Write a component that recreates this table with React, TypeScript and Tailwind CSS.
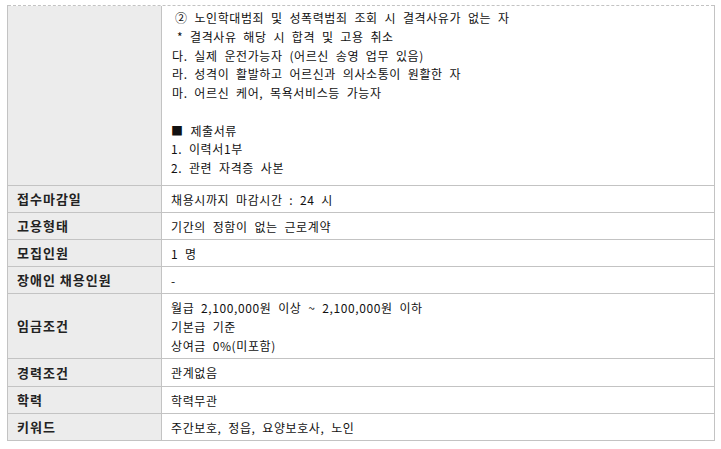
const font = "font-['Noto_Sans_CJK_KR','Noto_Sans',sans-serif]";
const body = "text-[12px] tracking-[0.6px] [word-spacing:3.5px] text-[#111]";

interface Row {
  label: string;
  lines: string[];
  height: string;
}

const rows: Row[] = [
  { label: "접수마감일", lines: ["채용시까지 마감시간 : 24 시"], height: "h-[27px]" },
  { label: "고용형태", lines: ["기간의 정함이 없는 근로계약"], height: "h-[27px]" },
  { label: "모집인원", lines: ["1 명"], height: "h-[27px]" },
  { label: "장애인 채용인원", lines: ["-"], height: "h-[27px]" },
  {
    label: "임금조건",
    lines: ["월급 2,100,000원 이상 ~ 2,100,000원 이하", "기본급 기준", "상여금 0%(미포함)"],
    height: "h-[65px]",
  },
  { label: "경력조건", lines: ["관계없음"], height: "h-[28px]" },
  { label: "학력", lines: ["학력무관"], height: "h-[27px]" },
  { label: "키워드", lines: ["주간보호, 정읍, 요양보호사, 노인"], height: "h-[27px]" },
];

const detail: { text: string; indent?: string }[] = [
  { text: "② 노인학대범죄 및 성폭력범죄 조회 시 결격사유가 없는 자", indent: "pl-[4px]" },
  { text: "* 결격사유 해당 시 합격 및 고용 취소", indent: "pl-[6px]" },
  { text: "다. 실제 운전가능자 (어르신 송영 업무 있음)", indent: "pl-[1px]" },
  { text: "라. 성격이 활발하고 어르신과 의사소통이 원활한 자", indent: "pl-[1px]" },
  { text: "마. 어르신 케어, 목욕서비스등 가능자", indent: "pl-[1px]" },
  { text: "" },
  { text: "■ 제출서류" },
  { text: "1. 이력서1부" },
  { text: "2. 관련 자격증 사본" },
];

export default function App() {
  return (
    <div className={`w-[721px] h-[449px] bg-white pt-[5px] ${font}`}>
      <div className="ml-[7px] w-[708px] border-l border-r border-b border-[#c3c3c3]">
        {/* first row, cut off at the top */}
        <div className="grid grid-cols-[154px_1fr] h-[180px] border-t border-dashed border-[#c3c3c3]">
          <div className="bg-[#ececec] border-r border-[#c3c3c3]" />
          <div className={`pl-[9px] pt-[3px] leading-[18.75px] ${body}`}>
            {detail.map((d, i) => (
              <div key={i} className={`h-[18.75px] whitespace-nowrap ${d.indent ?? ""}`}>
                {d.text}
              </div>
            ))}
          </div>
        </div>

        {rows.map((r) => (
          <div
            key={r.label}
            className={`grid grid-cols-[154px_1fr] border-t border-[#c3c3c3] ${r.height}`}
          >
            <div className="flex items-center bg-[#ececec] border-r border-[#c3c3c3] pl-[9px] text-[13px] font-bold tracking-[1px] text-[#222]">
              {r.label}
            </div>
            <div className={`flex flex-col justify-center pl-[9px] leading-[19px] ${body}`}>
              {r.lines.map((l) => (
                <div key={l}>{l}</div>
              ))}
            </div>
          </div>
        ))}
      </div>
    </div>
  );
}
